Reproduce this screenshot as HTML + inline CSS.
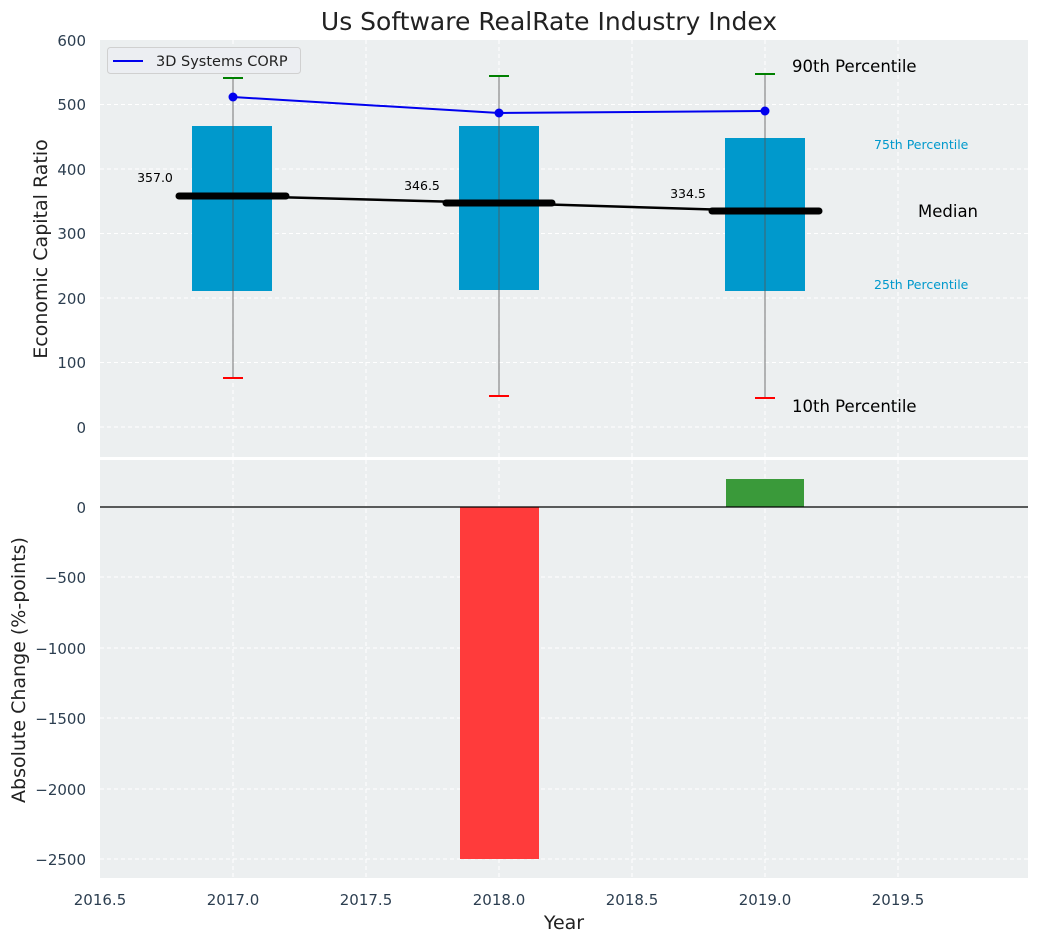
<!DOCTYPE html>
<html><head><meta charset="utf-8"><style>
html,body{margin:0;padding:0;background:#fff;}
svg{display:block;font-family:"DejaVu Sans","Liberation Sans",sans-serif;}
</style></head><body>
<svg width="1039" height="942" viewBox="0 0 1039 942" xmlns="http://www.w3.org/2000/svg">
<rect width="1039" height="942" fill="#fff"/>
<text x="549" y="30" font-size="25" text-anchor="middle" fill="#222">Us Software RealRate Industry Index</text>
<rect x="100" y="40" width="928" height="417" fill="#eceff0"/>
<g stroke="#fff" stroke-dasharray="4,3" stroke-width="1">
<line x1="233" y1="40" x2="233" y2="457"/><line x1="366" y1="40" x2="366" y2="457"/><line x1="499" y1="40" x2="499" y2="457"/><line x1="632" y1="40" x2="632" y2="457"/><line x1="765" y1="40" x2="765" y2="457"/><line x1="898" y1="40" x2="898" y2="457"/>
<line x1="100" y1="427" x2="1028" y2="427"/><line x1="100" y1="362.5" x2="1028" y2="362.5"/><line x1="100" y1="298" x2="1028" y2="298"/><line x1="100" y1="233.5" x2="1028" y2="233.5"/><line x1="100" y1="169" x2="1028" y2="169"/><line x1="100" y1="104.5" x2="1028" y2="104.5"/>
</g>
<g font-size="15" fill="#2c3e50" text-anchor="end">
<text x="86" y="433">0</text><text x="86" y="368">100</text><text x="86" y="304">200</text><text x="86" y="239">300</text><text x="86" y="175">400</text><text x="86" y="110">500</text><text x="86" y="46">600</text>
</g>
<text transform="translate(47,249) rotate(-90)" font-size="19" fill="#222" text-anchor="middle">Economic Capital Ratio</text>
<g fill="#0099cc"><rect x="192" y="126" width="80" height="165"/><rect x="459" y="126" width="80" height="164"/><rect x="725" y="138" width="80" height="153"/></g>
<g stroke="#555" stroke-width="1" opacity="0.8"><line x1="233" y1="78" x2="233" y2="378"/><line x1="499" y1="76" x2="499" y2="396"/><line x1="765" y1="74" x2="765" y2="398"/></g>
<g stroke="green" stroke-width="2"><line x1="223" y1="78" x2="243" y2="78"/><line x1="489" y1="76" x2="509" y2="76"/><line x1="755" y1="74" x2="775" y2="74"/></g>
<g stroke="red" stroke-width="2"><line x1="223" y1="378" x2="243" y2="378"/><line x1="489" y1="396" x2="509" y2="396"/><line x1="755" y1="398" x2="775" y2="398"/></g>
<polyline points="233,196 499,203 765,211" fill="none" stroke="#000" stroke-width="2.5"/>
<g stroke="#000" stroke-width="7" stroke-linecap="round"><line x1="179" y1="196" x2="286" y2="196"/><line x1="446" y1="203" x2="552" y2="203"/><line x1="712" y1="211" x2="819" y2="211"/></g>
<polyline points="233,97 499,113 765,111" fill="none" stroke="#0000ee" stroke-width="2"/>
<g fill="#0000ee"><circle cx="233" cy="97" r="4.5"/><circle cx="499" cy="113" r="4.5"/><circle cx="765" cy="111" r="4.5"/></g>
<g font-size="12.5" fill="#000" text-anchor="middle"><text x="155" y="182">357.0</text><text x="422" y="190">346.5</text><text x="688" y="198">334.5</text></g>
<text x="792" y="72" font-size="16.5" fill="#000">90th Percentile</text>
<text x="792" y="412" font-size="16.5" fill="#000">10th Percentile</text>
<text x="918" y="217" font-size="16.5" fill="#000">Median</text>
<text x="874" y="149" font-size="12.5" fill="#0099cc">75th Percentile</text>
<text x="874" y="289" font-size="12.5" fill="#0099cc">25th Percentile</text>
<rect x="107.5" y="47.5" width="193" height="26" rx="3" fill="#eceef2" stroke="#d0d0d0"/>
<line x1="113" y1="61" x2="143" y2="61" stroke="#0000ee" stroke-width="2"/>
<text x="156" y="66" font-size="14.5" fill="#222">3D Systems CORP</text>
<rect x="100" y="460" width="928" height="418" fill="#eceff0"/>
<g stroke="#fff" stroke-dasharray="4,3" stroke-width="1">
<line x1="233" y1="460" x2="233" y2="878"/><line x1="366" y1="460" x2="366" y2="878"/><line x1="499" y1="460" x2="499" y2="878"/><line x1="632" y1="460" x2="632" y2="878"/><line x1="765" y1="460" x2="765" y2="878"/><line x1="898" y1="460" x2="898" y2="878"/>
<line x1="100" y1="577" x2="1028" y2="577"/><line x1="100" y1="648" x2="1028" y2="648"/><line x1="100" y1="718" x2="1028" y2="718"/><line x1="100" y1="789" x2="1028" y2="789"/><line x1="100" y1="859" x2="1028" y2="859"/>
</g>
<rect x="460" y="507" width="79" height="352" fill="#ff3b3b"/>
<rect x="726" y="479" width="78" height="28" fill="#3a9a3a"/>
<line x1="100" y1="507" x2="1028" y2="507" stroke="#000" stroke-width="1.3"/>
<g font-size="15" fill="#2c3e50" text-anchor="end">
<text x="86" y="513">0</text><text x="86" y="583">−500</text><text x="86" y="654">−1000</text><text x="86" y="724">−1500</text><text x="86" y="795">−2000</text><text x="86" y="865">−2500</text>
</g>
<text transform="translate(25,670) rotate(-90)" font-size="19" fill="#222" text-anchor="middle">Absolute Change (%-points)</text>
<g font-size="15" fill="#2c3e50" text-anchor="middle">
<text x="100" y="905">2016.5</text><text x="233" y="905">2017.0</text><text x="366" y="905">2017.5</text><text x="499" y="905">2018.0</text><text x="632" y="905">2018.5</text><text x="765" y="905">2019.0</text><text x="898" y="905">2019.5</text>
</g>
<text x="564" y="929" font-size="19" fill="#222" text-anchor="middle">Year</text>
</svg>
</body></html>
